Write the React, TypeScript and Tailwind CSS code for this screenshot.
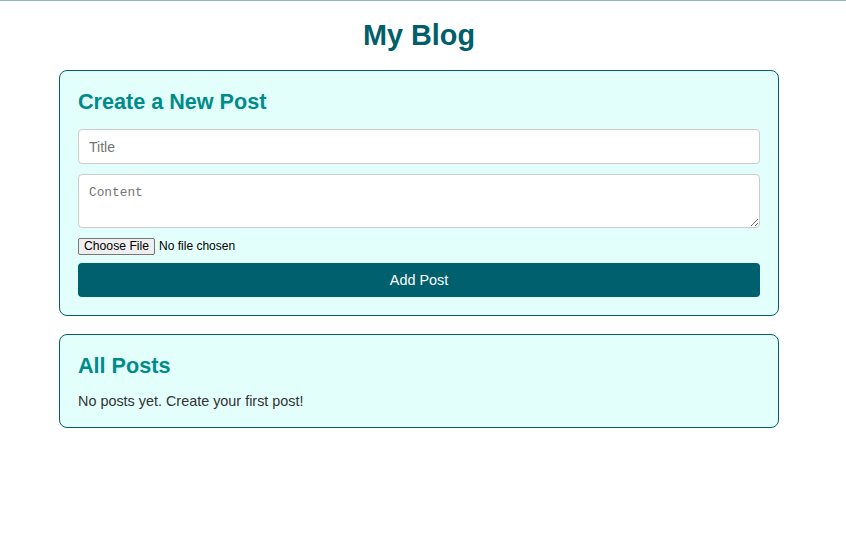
import React from "react";

export default function App() {
  return (
    <div className="min-h-[538px] bg-white font-['Liberation_Sans',Arial,sans-serif] text-[#333]">
      <div className="h-px bg-[#8fb8bb]" />
      <div className="w-[838px] flex flex-col items-center">
        <h1 className="mt-[18px] mb-[18px] text-[28.8px] leading-[33px] font-bold text-[#005f6b]">
          My Blog
        </h1>

        <section className="w-[720px] border border-[#00606e] rounded-lg bg-[#e2fffb] p-[18px]">
          <h2 className="text-[21.6px] leading-[25px] font-bold text-[#008b8b] mb-[15px]">
            Create a New Post
          </h2>
          <input
            type="text"
            placeholder="Title"
            className="block w-full h-[35px] px-[10px] bg-white border border-[#ccc] rounded-[4px] text-[14px] placeholder:text-[#757575] outline-none"
          />
          <textarea
            placeholder="Content"
            className="block w-full h-[54px] mt-[10px] px-[10px] pt-[8px] bg-white border border-[#ccc] rounded-[4px] font-['Liberation_Mono',monospace] text-[12.8px] placeholder:text-[#757575] outline-none"
          />
          <div className="mt-[10px] h-[17px] flex items-center">
            <input
              type="file"
              className="text-[12px] text-black h-[17px] leading-[15px] file:mr-[4px] file:h-[17px] file:px-[5px] file:border file:border-solid file:border-[#767676] file:rounded-[2px] file:bg-[#efefef] file:text-black file:text-[12.2px]"
            />
          </div>
          <button className="mt-[8px] w-full h-[34px] pt-[2px] bg-[#00606e] text-white text-[14.4px] rounded-[4px]">
            Add Post
          </button>
        </section>

        <section className="w-[720px] mt-[18px] border border-[#00606e] rounded-lg bg-[#e2fffb] p-[18px]">
          <h2 className="text-[21.6px] leading-[25px] font-bold text-[#008b8b] mb-[16px]">
            All Posts
          </h2>
          <p className="text-[14.4px] leading-[14.5px] text-[#333]">
            No posts yet. Create your first post!
          </p>
        </section>
      </div>
    </div>
  );
}
